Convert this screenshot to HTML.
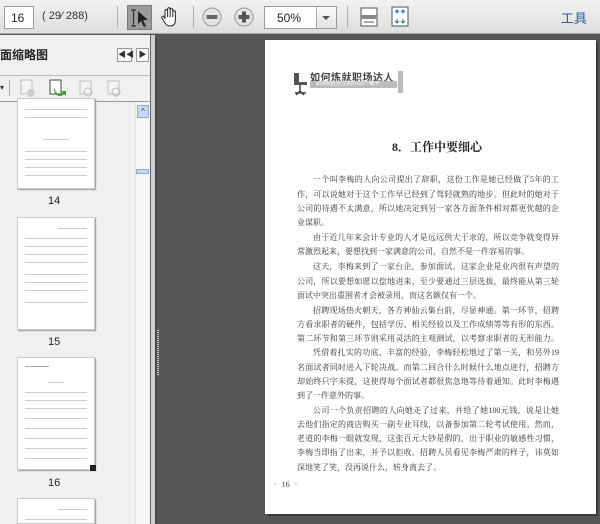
<!DOCTYPE html><html><head><meta charset="utf-8"><style>
*{margin:0;padding:0;box-sizing:border-box}
html,body{width:600px;height:524px;overflow:hidden}
body{position:relative;background:#565656;font-family:"Liberation Sans","Noto Sans CJK SC",sans-serif}
.a{position:absolute}
#tb{left:0;top:0;width:600px;height:34px;background:linear-gradient(#f2f2f2,#dedede);border-bottom:1px solid #a8a8a8}
.sep{position:absolute;top:6px;width:1px;height:22px;background:#b0b0b0}
.box{position:absolute;background:#fff;border:1px solid #9a9a9a;font-size:12px;color:#222}
.pl{font-family:"Liberation Serif","Noto Serif CJK SC",serif;font-size:8px;color:#333;white-space:nowrap;position:absolute;left:297px;width:262px;text-align:justify;text-align-last:justify;line-height:10px}
.pl.i{left:313px;width:246px}
.pl.e{text-align-last:left}
.th{position:absolute;left:17px;width:78px;background:#fff;box-shadow:1px 1px 1px #999;border:1px solid #ccc;overflow:hidden}
.ln{position:absolute;left:7px;right:7px;height:1px;background:#ccc}
.lbl{position:absolute;left:48px;font-size:11px;color:#222}
</style></head><body>
<div id="tb" class="a">
 <div class="box" style="left:4px;top:6px;width:30px;height:23px;padding:4px 0 0 6px">16</div>
 <div class="a" style="left:42px;top:10px;font-size:11px;color:#333">( 29⁄ 288)</div>
 <div class="sep" style="left:117px"></div>
 <div class="a" style="left:127px;top:5px;width:25px;height:25px;background:#9c9c9c;border:1px solid #7a7a7a"></div>
 <svg class="a" style="left:128px;top:7px" width="24" height="22"><path d="M3 3h5M3 19h5M5.5 3v16" stroke="#333" stroke-width="1.2" fill="none"/><path d="M10 4l10 9-5 0 3 6-2 1-3-6-3 3z" fill="#222"/></svg>
 <svg class="a" style="left:160px;top:6px" width="20" height="22"><path d="M5 12V5a1.3 1.3 0 0 1 2.6 0V11M7.6 10V3a1.3 1.3 0 0 1 2.6 0v8M10.2 10V4a1.3 1.3 0 0 1 2.6 0v7M12.8 11V6a1.3 1.3 0 0 1 2.6 0v8c0 4-2 6-5 6s-4-1-6-4l-2.5-4a1.2 1.2 0 0 1 2-1.300L5 13" stroke="#333" stroke-width="1.1" fill="#fff"/></svg>
 <div class="sep" style="left:193px"></div>
 <svg class="a" style="left:202px;top:7px" width="20" height="20"><circle cx="10" cy="10" r="9" fill="#e4e4e4" stroke="#999"/><rect x="4.5" y="8" width="11" height="4" fill="#666"/></svg>
 <svg class="a" style="left:234px;top:7px" width="20" height="20"><circle cx="10" cy="10" r="9" fill="#e4e4e4" stroke="#999"/><rect x="4.5" y="8" width="11" height="4" fill="#555"/><rect x="8" y="4.5" width="4" height="11" fill="#555"/></svg>
 <div class="box" style="left:264px;top:6px;width:73px;height:23px;padding:4px 0 0 12px">50%</div>
 <div class="a" style="left:316px;top:7px;width:20px;height:21px;background:linear-gradient(#fafafa,#e2e2e2);border-left:1px solid #aaa"></div>
 <div class="a" style="left:322px;top:16px;border:4px solid transparent;border-top:4px solid #555;width:0;height:0"></div>
 <div class="sep" style="left:347px"></div>
 <svg class="a" style="left:360px;top:7px" width="18" height="20"><rect x="1" y="1" width="16" height="18" fill="#fff" stroke="#555"/><rect x="1" y="8" width="16" height="4" fill="#888"/><path d="M4 15h10" stroke="#555"/></svg>
 <svg class="a" style="left:391px;top:6px" width="18" height="21"><rect x="1" y="1" width="16" height="19" fill="#fff" stroke="#555"/><path d="M6 4v4M4 6l2-2 2 2M12 4v4M10 6l2-2 2 2M6 17v-4M4 15l2 2 2-2M12 17v-4M10 15l2 2 2-2" stroke="#2a6ab0" fill="none"/></svg>
 <div class="a" style="left:561px;top:8px;font-size:13px;color:#2a5ea8">工具</div>
</div>
<div class="a" style="left:0;top:35px;width:151px;height:489px;background:#f0f0ee"></div>
<div class="a" style="left:0;top:46px;font-size:12px;font-weight:bold;color:#222">面缩略图</div>
<div class="a" style="left:117px;top:48px;width:15px;height:14px;border:1px solid #999;background:#f8f8f8;font-size:8px;color:#333;text-align:center;line-height:12px">◀◀</div>
<div class="a" style="left:136px;top:48px;width:13px;height:14px;border:1px solid #999;background:#f8f8f8;font-size:8px;color:#333;text-align:center;line-height:12px">▶</div>
<div class="a" style="left:0;top:75px;width:151px;height:1px;background:#bbb"></div>
<div class="a" style="left:0;top:83px;font-size:8px;color:#333">▾</div>
<div class="a" style="left:9px;top:80px;width:1px;height:16px;background:#aaa"></div>
<svg class="a" style="left:19px;top:78px" width="110" height="20"><rect x="2" y="2" width="11" height="14" fill="#f4f4f4" stroke="#bbb"/><circle cx="12" cy="15" r="4" fill="#ccc"/><rect x="31" y="2" width="11" height="14" fill="#fff" stroke="#444"/><path d="M36 11c0 5 6 6 8 3l-2-1h5v5l-2-2c-3 4-10 2-10-5z" fill="#3a9a2a"/><rect x="61" y="3" width="11" height="13" fill="#f4f4f4" stroke="#bbb"/><circle cx="69" cy="14" r="4" fill="none" stroke="#bbb"/><rect x="89" y="3" width="11" height="13" fill="#f4f4f4" stroke="#bbb"/><circle cx="97" cy="14" r="4" fill="none" stroke="#bbb"/></svg>
<div class="a" style="left:0;top:101px;width:151px;height:1px;background:#999"></div>
<div class="a" style="left:135px;top:102px;width:15px;height:422px;background:#f6f6f4;border-left:1px solid #e0e0e0"></div>
<div class="a" style="left:137px;top:105px;width:12px;height:13px;background:#c8d8f0;border:1px solid #90a8d0;font-size:8px;text-align:center;line-height:11px;color:#345">^</div>
<div class="a" style="left:136px;top:169px;width:13px;height:5px;background:#c8d8f0;border:1px solid #90a8d0"></div>
<div class="th" style="top:98px;height:91px"><div class="ln" style="top:10px"></div><div class="ln" style="top:18px"></div><div class="ln" style="top:40px;left:25px;right:25px"></div><div class="ln" style="top:52px"></div><div class="ln" style="top:60px"></div><div class="ln" style="top:68px"></div><div class="ln" style="top:76px"></div></div>
<div class="lbl" style="top:195px">14</div>
<div class="th" style="top:217px;height:113px"><div class="ln" style="top:10px;left:40px"></div><div class="ln" style="top:20px"></div><div class="ln" style="top:28px"></div><div class="ln" style="top:36px"></div><div class="ln" style="top:44px"></div><div class="ln" style="top:56px"></div><div class="ln" style="top:64px"></div><div class="ln" style="top:72px"></div><div class="ln" style="top:84px"></div></div>
<div class="lbl" style="top:336px">15</div>
<div class="th" style="top:357px;height:113px"><div class="ln" style="top:8px;right:45px;background:#aaa"></div><div class="ln" style="top:24px;left:30px;right:30px"></div><div class="ln" style="top:34px"></div><div class="ln" style="top:42px"></div><div class="ln" style="top:50px"></div><div class="ln" style="top:60px"></div><div class="ln" style="top:70px"></div><div class="ln" style="top:80px"></div><div class="ln" style="top:90px"></div><div class="ln" style="top:100px"></div></div>
<div class="a" style="left:90px;top:465px;width:6px;height:6px;background:#222"></div>
<div class="lbl" style="top:477px">16</div>
<div class="th" style="top:498px;height:26px"><div class="ln" style="top:10px;left:40px"></div><div class="ln" style="top:20px"></div></div>
<div class="a" style="left:150px;top:35px;width:1px;height:489px;background:#666"></div>
<div class="a" style="left:151px;top:35px;width:4px;height:489px;background:#d0d0d0"></div>
<div class="a" style="left:155px;top:35px;width:2px;height:489px;background:#4a4a4a"></div>
<div class="a" style="left:157px;top:330px;width:2px;height:46px;background:repeating-linear-gradient(#ccc 0 1px,transparent 1px 2px)"></div>
<div class="a" style="left:265px;top:40px;width:331px;height:474px;background:#fff;box-shadow:2px 2px 0 #3a3a3a"></div>
<svg class="a" style="left:292px;top:71px" width="18" height="26"><rect x="2" y="2" width="5" height="10" fill="#555"/><rect x="2" y="11" width="13" height="3" fill="#555"/><path d="M8 14v6M3 22h11M8 20l-4 4M8 20l4 4" stroke="#444" stroke-width="1.5"/></svg>
<div class="a" style="left:310px;top:69px;font-size:10px;color:#444;font-weight:bold;letter-spacing:0.5px">如何炼就职场达人</div>
<div class="a" style="left:310px;top:81px;width:87px;height:7px;background:#bbb;font-size:5px;color:#fff;line-height:7px;padding-left:6px;overflow:hidden;white-space:nowrap">职场制胜要注意的100个细节</div>
<div class="a" style="left:398px;top:71px;width:5px;height:22px;background:#bbb"></div>
<div class="a" style="left:392px;top:138px;font-size:12px;font-weight:bold;color:#222;font-family:'Liberation Serif','Noto Serif CJK SC',serif;white-space:nowrap">8．工作中要细心</div>
<div class="pl i" style="top:175px">一个叫李梅的人向公司提出了辞职，这份工作是她已经做了5年的工</div>
<div class="pl" style="top:190px">作，可以说她对于这个工作早已经到了驾轻就熟的地步。但此时的她对于</div>
<div class="pl" style="top:204px">公司的待遇不太满意，所以她决定到另一家各方面条件相对都更优越的企</div>
<div class="pl e" style="top:218px">业谋职。</div>
<div class="pl i" style="top:233px">由于近几年来会计专业的人才是远远供大于求的，所以竞争就变得异</div>
<div class="pl e" style="top:247px">常激烈起来，要想找到一家满意的公司，自然不是一件容易的事。</div>
<div class="pl i" style="top:262px">这天，李梅来到了一家台企，参加面试。这家企业是业内很有声望的</div>
<div class="pl" style="top:277px">公司，所以要想如愿以偿地进来，至少要通过三层选拔，最终能从第三轮</div>
<div class="pl e" style="top:291px">面试中突出重围者才会被录用，而这名额仅有一个。</div>
<div class="pl i" style="top:306px">招聘现场热火朝天，各方神仙云集台前，尽显神通。第一环节，招聘</div>
<div class="pl" style="top:320px">方看求职者的硬件，包括学历、相关经验以及工作成绩等等有形的东西。</div>
<div class="pl" style="top:334px">第二环节和第三环节则采用灵活的主观测试，以考察求职者的无形能力。</div>
<div class="pl i" style="top:348px">凭借着扎实的功底、丰富的经验，李梅轻松地过了第一关，和另外19</div>
<div class="pl" style="top:363px">名面试者同时进入下轮决战。而第二回合什么时候什么地点进行，招聘方</div>
<div class="pl" style="top:377px">却始终只字未提，这使得每个面试者都很焦急地等待着通知。此时李梅遇</div>
<div class="pl e" style="top:391px">到了一件意外的事。</div>
<div class="pl i" style="top:406px">公司一个负责招聘的人向她走了过来，并给了她100元钱，说是让她</div>
<div class="pl" style="top:420px">去他们指定的商店购买一副专业耳线，以备参加第二轮考试使用。然而，</div>
<div class="pl" style="top:434px">老道的李梅一眼就发现，这张百元大钞是假的，出于职业的敏感性习惯，</div>
<div class="pl" style="top:448px">李梅当即指了出来，并予以拒收。招聘人员看见李梅严肃的样子，讳莫如</div>
<div class="pl e" style="top:463px">深地笑了笑，没再说什么，转身离去了。</div>
<div class="a" style="left:274px;top:480px;font-family:'Liberation Serif',serif;font-size:8px;color:#444;word-spacing:3px">· 16 ·</div>
</body></html>
